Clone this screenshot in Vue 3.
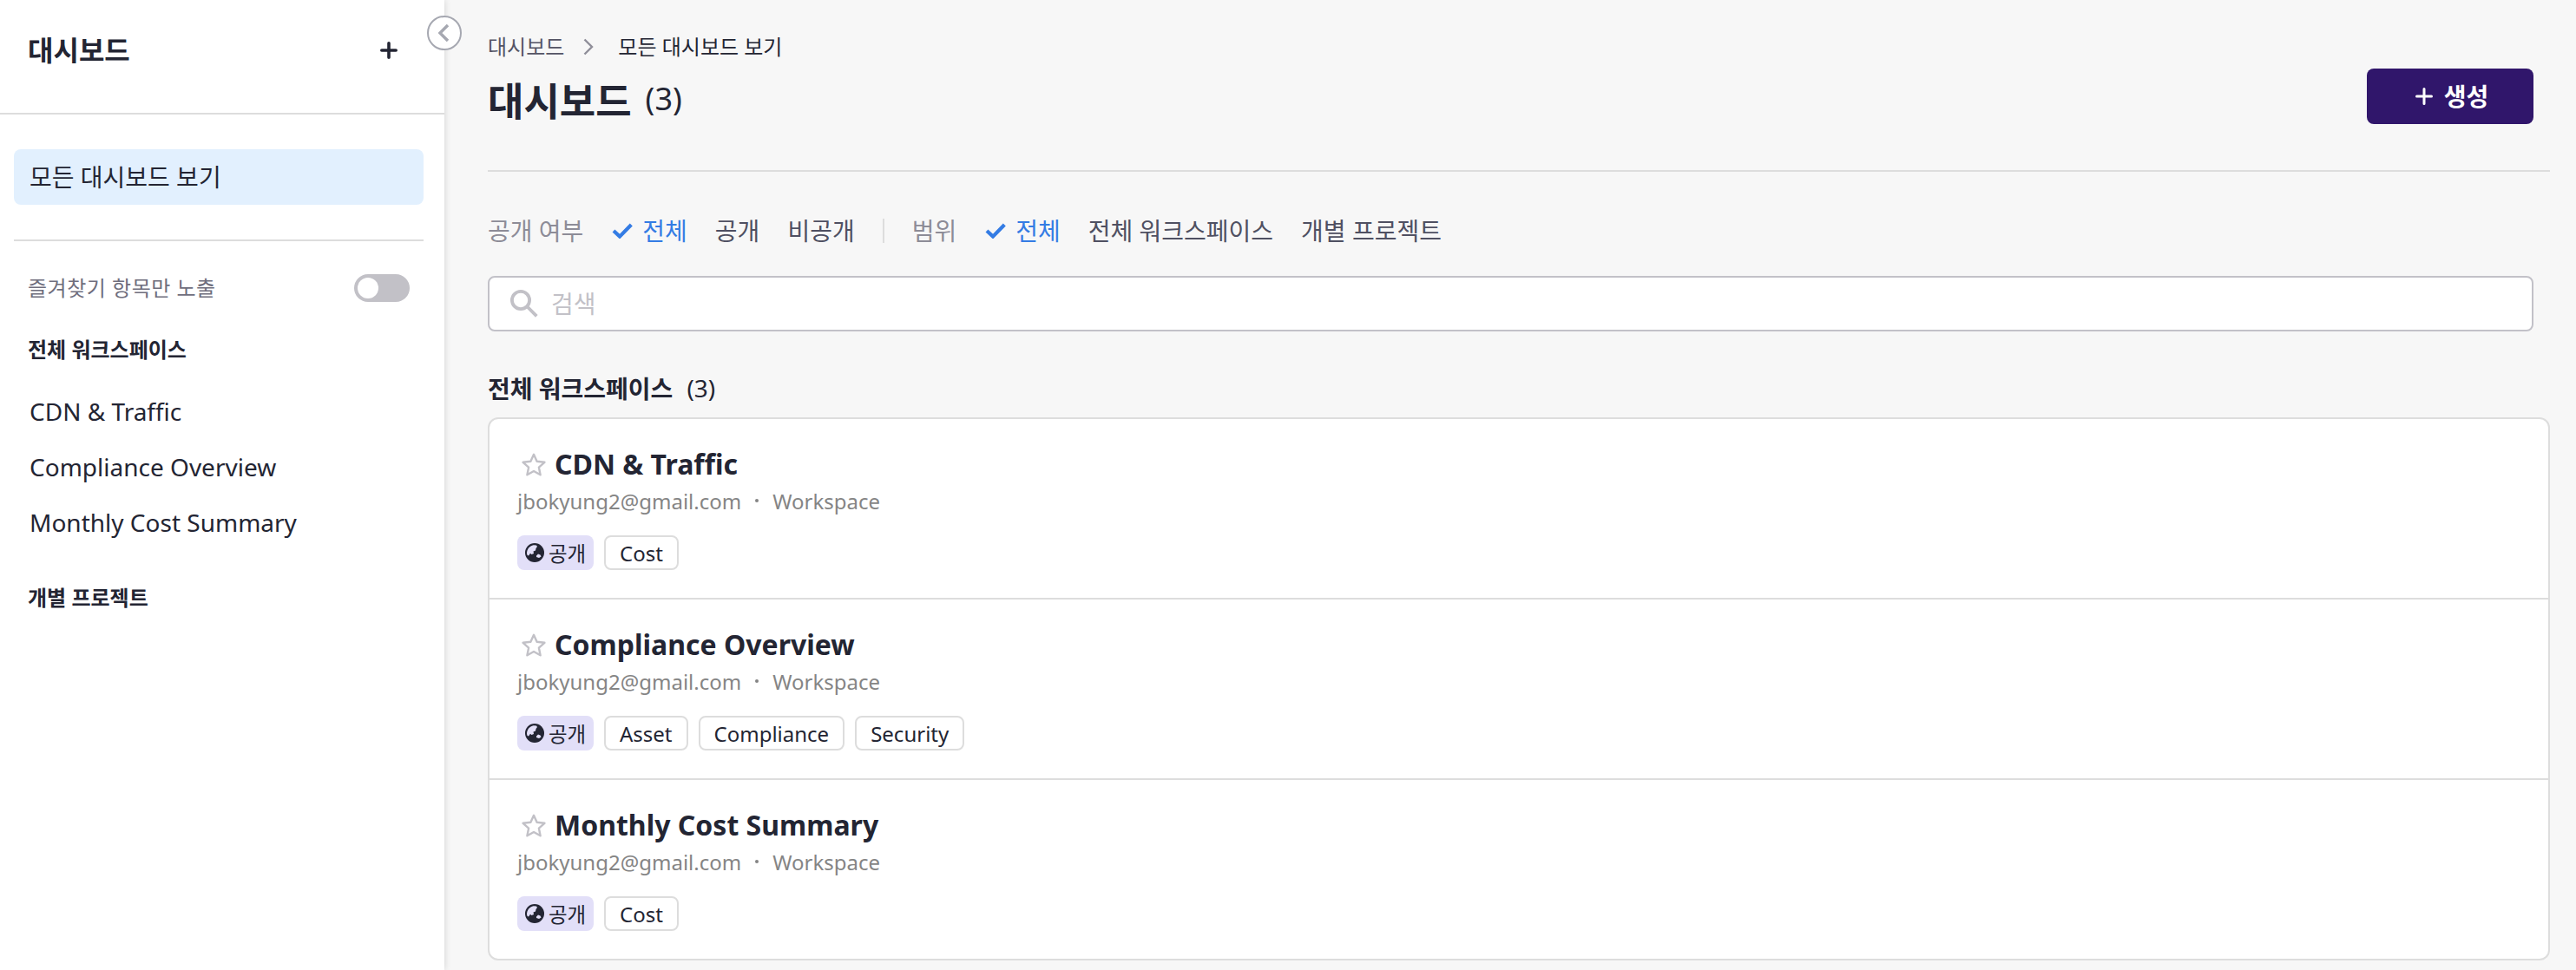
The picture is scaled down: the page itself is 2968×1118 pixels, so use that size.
<script setup>
const sidebarItems = ['CDN & Traffic', 'Compliance Overview', 'Monthly Cost Summary']

const filters = [
  { label: '공개 여부', options: ['전체', '공개', '비공개'] },
  { label: '범위', options: ['전체', '전체 워크스페이스', '개별 프로젝트'] },
]

const dashboards = [
  { name: 'CDN & Traffic', tags: ['Cost'] },
  { name: 'Compliance Overview', tags: ['Asset', 'Compliance', 'Security'] },
  { name: 'Monthly Cost Summary', tags: ['Cost'] },
]
</script>

<template>
  <div class="layout">
    <aside class="sidebar">
      <header class="side-header">
        <h2>대시보드</h2>
        <svg class="plus" viewBox="0 0 20 20"><path d="M10 1.800v16.400M1.800 10h16.400" /></svg>
      </header>
      <button class="collapse" aria-label="collapse">
        <svg viewBox="0 0 40 40"><circle cx="20" cy="20" r="19" /><path d="M24 11l-9 9 9 9" /></svg>
      </button>
      <div class="side-body">
        <a class="all">모든 대시보드 보기</a>
        <hr />
        <div class="fav">
          <span>즐겨찾기 항목만 노출</span>
          <span class="toggle"><i></i></span>
        </div>
        <h3>전체 워크스페이스</h3>
        <nav>
          <a v-for="item in sidebarItems" :key="item">{{ item }}</a>
        </nav>
        <h3 class="projects">개별 프로젝트</h3>
      </div>
    </aside>

    <main class="content">
      <nav class="crumbs">
        <span>대시보드</span>
        <svg viewBox="0 0 12 20"><path d="M1.5 1.5l8.5 8.5-8.5 8.5" /></svg>
        <b>모든 대시보드 보기</b>
      </nav>
      <div class="title-row">
        <h1>대시보드</h1>
        <span class="total">(3)</span>
        <button class="create">
          <svg class="plus" viewBox="0 0 20 20"><path d="M10 1.5v17M1.5 10h17" /></svg>
          <span>생성</span>
        </button>
      </div>
      <div class="filters">
        <div v-for="group in filters" :key="group.label" class="group">
          <span class="label">{{ group.label }}</span>
          <span class="option on">
            <svg viewBox="0 0 24 18"><path d="M2 9l7 6.6L22.3 2" /></svg>{{ group.options[0] }}
          </span>
          <span v-for="option in group.options.slice(1)" :key="option" class="option">{{ option }}</span>
        </div>
      </div>
      <div class="search">
        <svg viewBox="0 0 32 32"><circle cx="12" cy="12" r="10.1" /><path d="M19.5 19.5L30.3 30.3" /></svg>
        <span>검색</span>
      </div>
      <div class="section"><h2>전체 워크스페이스</h2><span>(3)</span></div>
      <ul class="list">
        <li v-for="board in dashboards" :key="board.name">
          <div class="name">
            <svg viewBox="0 0 28 28"><path d="M14 1.8L17.6 9.8L26.4 10.8L19.9 16.7L21.6 25.3L14 21L6.4 25.3L8.1 16.7L1.6 10.8L10.4 9.8Z" /></svg>
            <h3>{{ board.name }}</h3>
          </div>
          <div class="meta"><span>jbokyung2@gmail.com</span><i></i><span>Workspace</span></div>
          <div class="tags">
            <span class="public">
              <svg viewBox="0 0 22 22">
                <circle class="globe" cx="11" cy="11" r="11" />
                <path class="land" d="M2 12C2 7 5 3 9.800 2.200L13 2.500 14 4 12.500 6 12 8.500 9.500 9.500 10 12 7.500 13 6 11.800 4 14.500 2.600 14zM13 14.500l2-2 2.500 1 1 2-2.500 1.500-3-1z" />
              </svg>공개
            </span>
            <span v-for="tag in board.tags" :key="tag" class="tag">{{ tag }}</span>
          </div>
        </li>
      </ul>
    </main>
  </div>
</template>

<style>
body { background: #f7f7f7; overflow: hidden; }
</style>

<style scoped>
* { box-sizing: border-box; }
h1, h2, h3, ul { margin: 0; padding: 0; }
svg { display: block; flex: none; fill: none; stroke: currentColor; }
button { border: 0; padding: 0; font: inherit; }

.layout {
  display: flex;
  width: 2968px;
  height: 1118px;
  overflow: hidden;
  background: #f7f7f7;
  color: #232533;
  font-family: "Noto Sans", "Noto Sans CJK KR", sans-serif;
  font-size: 28px;
}
.plus { width: 20px; height: 20px; stroke-width: 3; stroke-linecap: round; }

.sidebar {
  position: relative;
  flex: none;
  width: 512px;
  background: #fff;
  box-shadow: 0 0 8px rgba(0, 0, 0, 0.16);
}
.side-header {
  display: flex;
  align-items: center;
  justify-content: space-between;
  height: 132px;
  padding: 0 54px 14px 32px;
  border-bottom: 2px solid #ddd;
}
.side-header h2 { font-size: 32px; line-height: 48px; }
.side-header .plus { stroke-width: 3.6; }
.collapse {
  position: absolute;
  top: 18px;
  right: -20px;
  width: 40px;
  height: 40px;
  border-radius: 50%;
  background: #fff;
  color: #a6a8b1;
}
.collapse circle { stroke-width: 2; }
.collapse path { stroke-width: 3.4; }
.side-body { display: flex; flex-direction: column; padding: 40px 24px 0 16px; }
.all { height: 64px; padding-left: 18px; border-radius: 8px; background: #e2f0fe; line-height: 64px; }
hr { width: 100%; height: 2px; margin: 40px 0 38px; border: 0; background: #ddd; }
.fav {
  display: flex;
  align-items: center;
  justify-content: space-between;
  height: 32px;
  padding: 0 16px;
  color: #6f6e7d;
  font-size: 24px;
  letter-spacing: 0.5px;
}
.fav > span:first-child { padding-bottom: 3px; }
.toggle { display: flex; width: 64px; height: 32px; padding: 4px; border-radius: 16px; background: #c2c1c7; }
.toggle i { width: 24px; height: 24px; border-radius: 50%; background: #fff; }
.side-body h3 { margin: 39px 0 24px 16px; font-size: 24px; line-height: 32px; }
.side-body nav { display: flex; flex-direction: column; }
.side-body nav a { height: 64px; padding-left: 18px; line-height: 62px; }
.side-body h3.projects { margin-top: 38px; }

.content { display: flex; flex: 1; flex-direction: column; padding: 36px 30px 0 50px; }
.crumbs { display: flex; align-items: center; height: 34px; color: #545465; font-size: 24px; }
.crumbs span, .crumbs b { padding-bottom: 2px; }
.crumbs svg { width: 12px; height: 20px; margin: 1px 28px 0 22px; color: #8f8e99; stroke-width: 2.4; }
.crumbs b { color: #232533; font-weight: 400; }
.title-row {
  display: flex;
  align-items: center;
  height: 128px;
  padding: 0 19px 34px 0;
  border-bottom: 2px solid #ddd;
}
.title-row h1 { padding-top: 2px; font-size: 45px; line-height: 64px; }
.total { margin-left: 16px; padding-bottom: 5px; font-size: 36px; }
.create {
  display: flex;
  align-items: center;
  justify-content: center;
  gap: 13px;
  width: 192px;
  height: 64px;
  margin: -10px 0 0 auto;
  padding-left: 4px;
  border-radius: 8px;
  background: #30166b;
  color: #fff;
  font-weight: 700;
}
.create span { padding-bottom: 2px; }
.filters { display: flex; align-items: center; height: 40px; margin: 48px 0 32px; }
.group { display: flex; align-items: center; gap: 32px; height: 28px; }
.group + .group { margin-left: 32px; padding-left: 32px; border-left: 2px solid #ddd; }
.label { padding-bottom: 2px; color: #8d8c97; }
.option { display: flex; align-items: center; padding-bottom: 2px; color: #4f5062; }
.option.on { padding-left: 1px; color: #347ce4; }
.option svg { width: 24px; height: 18px; margin: 2px 11px 0 0; stroke-width: 4.2; }
.search {
  display: flex;
  align-items: center;
  height: 64px;
  margin-right: 19px;
  padding-left: 24px;
  border: 2px solid #c2c1c8;
  border-radius: 8px;
  background: #fff;
  color: #c2c1c7;
}
.search svg { width: 32px; height: 32px; margin-right: 15px; stroke-width: 3.8; }
.search span { padding-bottom: 2px; }
.section { display: flex; align-items: center; height: 40px; margin: 45px 0 14px; }
.section h2 { font-size: 28px; }
.section span { margin-left: 16px; }
.list { border: 2px solid #ddd; border-radius: 12px; background: #fff; list-style: none; }
li { height: 208px; padding: 32px 32px 0; border-bottom: 2px solid #ddd; }
li:last-child { height: 206px; border-bottom: 0; }
.name { display: flex; align-items: center; height: 42px; }
.name svg { width: 28px; height: 28px; margin: 0 10px 0 5px; color: #c2c1c7; stroke-width: 2.4; stroke-linejoin: round; }
.name h3 { padding-bottom: 2px; font-size: 32px; line-height: 42px; }
.meta { display: flex; align-items: center; height: 40px; color: #858585; font-size: 24px; }
.meta i { width: 4px; height: 4px; margin: 0 16px; border-radius: 50%; background: #858585; }
.tags { display: flex; gap: 12px; margin-top: 20px; font-size: 24px; }
.public { display: flex; align-items: center; width: 88px; height: 40px; padding-left: 9px; border-radius: 8px; background: #e2dff8; font-size: 23.5px; }
.public svg { width: 22px; height: 22px; margin-right: 5px; stroke: none; }
.globe { fill: #232533; }
.land { fill: #e2dff8; }
.tag { height: 40px; padding: 0 16px; border: 2px solid #ddd; border-radius: 8px; line-height: 37px; }
</style>
